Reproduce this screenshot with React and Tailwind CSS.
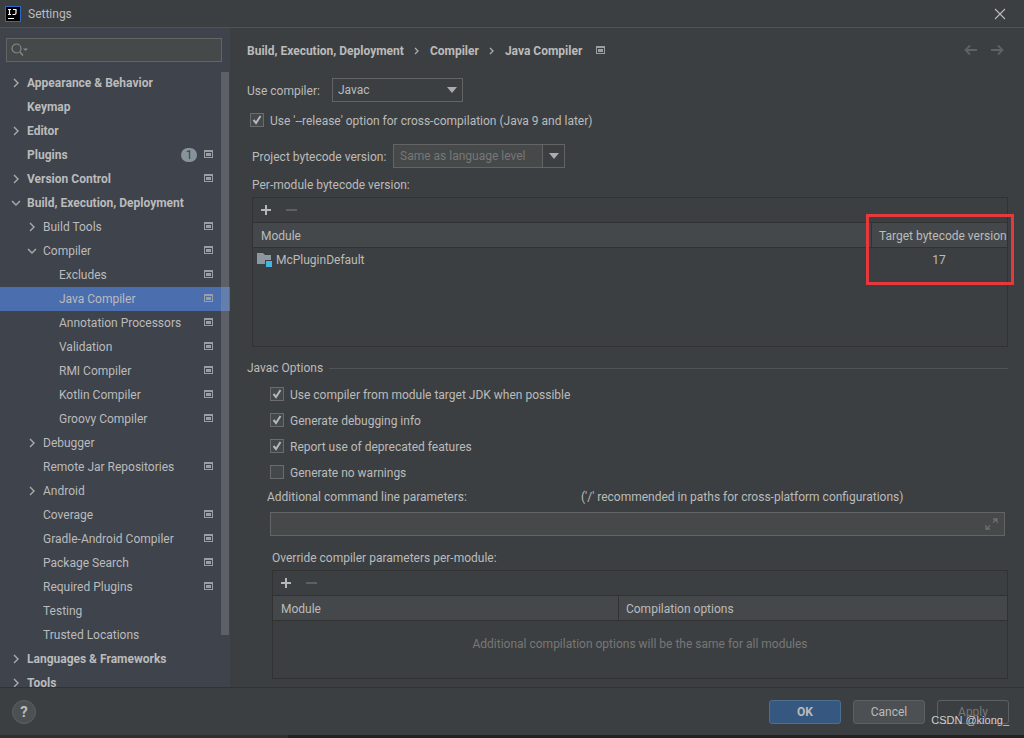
import React, { useState } from "react";

const TREE = [
  { label: "Appearance & Behavior", level: 0, arrow: "right" },
  { label: "Keymap", level: 0 },
  { label: "Editor", level: 0, arrow: "right" },
  { label: "Plugins", level: 0, badge: 1, project: true },
  { label: "Version Control", level: 0, arrow: "right", project: true },
  { label: "Build, Execution, Deployment", level: 0, arrow: "down" },
  { label: "Build Tools", level: 1, arrow: "right", project: true },
  { label: "Compiler", level: 1, arrow: "down", project: true },
  { label: "Excludes", level: 2, project: true },
  { label: "Java Compiler", level: 2, project: true },
  { label: "Annotation Processors", level: 2, project: true },
  { label: "Validation", level: 2, project: true },
  { label: "RMI Compiler", level: 2, project: true },
  { label: "Kotlin Compiler", level: 2, project: true },
  { label: "Groovy Compiler", level: 2, project: true },
  { label: "Debugger", level: 1, arrow: "right" },
  { label: "Remote Jar Repositories", level: 1, project: true },
  { label: "Android", level: 1, arrow: "right" },
  { label: "Coverage", level: 1, project: true },
  { label: "Gradle-Android Compiler", level: 1, project: true },
  { label: "Package Search", level: 1, project: true },
  { label: "Required Plugins", level: 1, project: true },
  { label: "Testing", level: 1 },
  { label: "Trusted Locations", level: 1 },
  { label: "Languages & Frameworks", level: 0, arrow: "right" },
  { label: "Tools", level: 0, arrow: "right" },
];

const INDENT = ["pl-[11px] font-bold", "pl-[27px]", "pl-[43px]"];

const JAVAC_OPTIONS = [
  { id: "jdk", label: "Use compiler from module target JDK when possible", on: true },
  { id: "debug", label: "Generate debugging info", on: true },
  { id: "deprecated", label: "Report use of deprecated features", on: true },
  { id: "nowarn", label: "Generate no warnings", on: false },
];

function ProjectIcon() {
  return (
    <svg width="9" height="10" viewBox="0 0 9 10" className="block shrink-0" aria-hidden="true">
      <path fill="#9a9fa4" fillRule="evenodd" d="M0 0h9v8H0zM1 2v5h7V2z" />
      <path fill="#9a9fa4" d="M2 3h5v3H2z" />
    </svg>
  );
}

function Arrow({ dir }) {
  return (
    <svg width="10" height="10" viewBox="0 0 10 10" fill="none" stroke="#a9adb1" strokeWidth="1.4" aria-hidden="true">
      {dir === "right" ? <path d="M3 1l4 4-4 4" /> : <path d="M1 3l4 4 4-4" />}
    </svg>
  );
}

function Checkbox({ id, label, defaultChecked }) {
  return (
    <label htmlFor={id} className="flex items-center gap-1.5">
      <span className="relative h-3.5 w-3.5">
        <input
          id={id}
          type="checkbox"
          defaultChecked={defaultChecked}
          className="peer block h-3.5 w-3.5 appearance-none border border-[#6b6b6b] bg-[#43494a]"
        />
        <svg
          viewBox="0 0 14 14"
          fill="none"
          stroke="#b4b8bb"
          strokeWidth="2"
          className="pointer-events-none absolute inset-0 hidden peer-checked:block"
          aria-hidden="true"
        >
          <path d="M3.5 7l2.5 3 4.5-7" />
        </svg>
      </span>
      <span className="pt-px">{label}</span>
    </label>
  );
}

function Toolbar() {
  return (
    <div className="flex h-[25px] shrink-0 items-center gap-3.5 border-b border-[#323232] pl-[7px]">
      <button aria-label="Add">
        <svg width="12" height="12" viewBox="0 0 12 12" className="block" stroke="#b4b8bb" strokeWidth="2">
          <path d="M6 1v10M1 6h10" />
        </svg>
      </button>
      <button aria-label="Remove" disabled>
        <svg width="12" height="12" viewBox="0 0 12 12" className="block" stroke="#5e6163" strokeWidth="2">
          <path d="M0 6h11" />
        </svg>
      </button>
    </div>
  );
}

function Crumb() {
  return (
    <svg width="6" height="8" viewBox="0 0 6 8" fill="none" stroke="#a9adb1" strokeWidth="1.3" aria-hidden="true">
      <path d="M1 1l3 3-3 3" />
    </svg>
  );
}

function NavArrow({ flip }) {
  return (
    <svg
      width="14"
      height="12"
      viewBox="0 0 14 12"
      fill="none"
      stroke="#5f6264"
      strokeWidth="1.8"
      className={flip ? "block rotate-180" : "block"}
      aria-hidden="true"
    >
      <path d="M13 6H1.5M6 1.5L1.5 6 6 10.5" />
    </svg>
  );
}

function Sidebar() {
  const [selected, setSelected] = useState("Java Compiler");

  return (
    <aside className="relative flex w-[230px] shrink-0 flex-col bg-[#3e434c]">
      <div className="flex h-[43px] shrink-0 items-start pt-2.5 pr-2 pl-1.5">
        <div className="relative h-6 w-full">
          <input
            type="text"
            aria-label="Search settings"
            className="h-6 w-full border border-[#646464] bg-[#45494a] pl-6 outline-none"
          />
          <svg
            width="18"
            height="14"
            viewBox="0 0 18 14"
            fill="none"
            stroke="#85898c"
            className="absolute top-[5px] left-[5px]"
            aria-hidden="true"
          >
            <circle cx="5.5" cy="5.5" r="4.5" strokeWidth="1.2" />
            <path d="M9 9l3 3.5" strokeWidth="1.4" />
            <path d="M12 5.5h5l-2.5 2.5z" fill="#85898c" stroke="none" />
          </svg>
        </div>
      </div>
      <ul className="min-h-0 flex-1 overflow-hidden">
        {TREE.map((item) => (
          <li key={item.label}>
            <button
              onClick={() => setSelected(item.label)}
              className={`flex h-6 w-full items-center gap-1.5 pr-[17px] text-left ${INDENT[item.level]} ${
                selected === item.label ? "bg-[#4b6eaf]" : ""
              }`}
            >
              <span className="w-2.5">{item.arrow && <Arrow dir={item.arrow} />}</span>
              <span className="flex-1 whitespace-nowrap">{item.label}</span>
              {item.badge && (
                <span className="mr-px flex h-3.5 w-4 items-center justify-center rounded-full bg-[#87939a] font-normal text-[#3a3f45]">
                  {item.badge}
                </span>
              )}
              {item.project && <ProjectIcon />}
            </button>
          </li>
        ))}
      </ul>
      <div className="absolute top-11 right-px h-[563px] w-2 bg-[#a6a6a6]/30" />
    </aside>
  );
}

export default function App() {
  return (
    <div className="flex h-screen flex-col overflow-hidden bg-[#3c3f41] font-['Roboto',sans-serif] text-[12px] leading-4 text-[#bbbbbb]">
      <header className="flex h-7 shrink-0 items-center gap-[7px] border-b border-[#515355] pr-[18px] pl-[5px]">
        <svg width="16" height="16" viewBox="0 0 16 16" aria-hidden="true">
          <path fill="#2f68c4" d="M0 0h16v16H0z" />
          <path fill="#000" d="M1 1h14v14H1z" />
          <path fill="none" stroke="#fff" strokeWidth="1.2" d="M3 3.500h3M4.500 3.500v5M3 8.500h3M8 3.500h3v3.500q0 1.500-1.500 1.500H7.500" />
          <path fill="#fff" d="M3 12h6v1H3z" />
        </svg>
        <span className="flex-1">Settings</span>
        <button aria-label="Close">
          <svg width="12" height="12" viewBox="0 0 12 12" className="block" stroke="#bbbbbb" strokeWidth="1.1">
            <path d="M1 1l10 10M11 1L1 11" />
          </svg>
        </button>
      </header>

      <div className="flex min-h-0 flex-1">
        <Sidebar />

        <main className="flex min-w-0 flex-1 flex-col pt-2.5 pr-4 pb-2 pl-[17px]">
          <div className="flex h-6 shrink-0 items-center justify-between pr-1">
            <nav className="flex items-center gap-2.5 pt-px font-bold">
              <span>Build, Execution, Deployment</span>
              <Crumb />
              <span>Compiler</span>
              <Crumb />
              <span>Java Compiler</span>
              <span className="pl-1">
                <ProjectIcon />
              </span>
            </nav>
            <div className="flex gap-3">
              <button aria-label="Back" disabled>
                <NavArrow />
              </button>
              <button aria-label="Forward" disabled>
                <NavArrow flip />
              </button>
            </div>
          </div>

          <div className="mt-4 flex h-6 shrink-0 items-center">
            <label htmlFor="compiler" className="w-[85px] pt-px whitespace-nowrap">
              Use compiler:
            </label>
            <div className="relative">
              <select
                id="compiler"
                className="block h-6 w-[131px] appearance-none border border-[#646464] bg-[#3c3f41] pl-[5px] outline-none"
              >
                <option>Javac</option>
                <option>Eclipse</option>
              </select>
              <svg width="10" height="6" viewBox="0 0 10 6" className="pointer-events-none absolute top-[9px] right-1.5" aria-hidden="true">
                <path fill="#a9adb1" d="M0 0h10L5 6z" />
              </svg>
            </div>
          </div>

          <div className="mt-2 flex h-5 shrink-0 items-center pl-[3px]">
            <Checkbox id="release" label="Use '--release' option for cross-compilation (Java 9 and later)" defaultChecked />
          </div>

          <div className="mt-3.5 flex h-6 shrink-0 items-center pl-[5px]">
            <label htmlFor="bytecode" className="w-[141px] pt-px whitespace-nowrap">
              Project bytecode version:
            </label>
            <div className="flex h-6 w-[172px] border border-[#646464]">
              <input
                id="bytecode"
                type="text"
                placeholder="Same as language level"
                className="min-w-0 flex-1 bg-[#45494a] pl-1.5 outline-none placeholder:text-[#777777]"
              />
              <button aria-label="Show versions" className="flex w-[22px] items-center justify-center border-l border-[#646464]">
                <svg width="10" height="6" viewBox="0 0 10 6" aria-hidden="true">
                  <path fill="#a9adb1" d="M0 0h10L5 6z" />
                </svg>
              </button>
            </div>
          </div>

          <div className="mt-[9px] shrink-0 pl-[5px]">Per-module bytecode version:</div>
          <div className="relative mt-1 ml-[5px] h-[150px] shrink-0 border border-[#323232]">
            <Toolbar />
            <table className="w-full table-fixed border-separate border-spacing-0">
              <colgroup>
                <col />
                <col className="w-[136px]" />
              </colgroup>
              <thead>
                <tr className="h-[25px] bg-[#45484a] text-left">
                  <th className="border-b border-[#323232] pt-px pr-0 pb-0 pl-2 font-normal">Module</th>
                  <th className="border-b border-l border-[#323232] pt-px pr-0 pb-0 pl-[7px] font-normal whitespace-nowrap">
                    Target bytecode version
                  </th>
                </tr>
              </thead>
              <tbody>
                <tr className="h-6">
                  <td className="p-0 pl-1">
                    <div className="flex items-center gap-1">
                      <svg width="15" height="14" viewBox="0 0 15 14" aria-hidden="true">
                        <path fill="#8c989f" d="M0 0h6l2 2h6v5H8v4H0z" />
                        <path fill="#40b6e0" d="M9 8h6v6H9z" />
                      </svg>
                      McPluginDefault
                    </div>
                  </td>
                  <td className="p-0 text-center">17</td>
                </tr>
              </tbody>
            </table>
            <div className="pointer-events-none absolute top-4 -right-[7px] h-[71px] w-[148px] border-3 border-[#e5393c]" />
          </div>

          <div className="mt-[13px] flex shrink-0 items-center gap-1.5">
            Javac Options
            <div className="h-px flex-1 bg-[#515355]" />
          </div>

          <div className="mt-[5px] shrink-0 pl-[23px]">
            {JAVAC_OPTIONS.map((opt) => (
              <div key={opt.id} className="flex h-[26px] items-center">
                <Checkbox id={opt.id} label={opt.label} defaultChecked={opt.on} />
              </div>
            ))}
          </div>

          <div className="mt-1 flex shrink-0 pl-5">
            <label htmlFor="params" className="w-[314px]">
              Additional command line parameters:
            </label>
            <span>{"('/' recommended in paths for cross-platform configurations)"}</span>
          </div>
          <div className="relative mt-[7px] mr-[3px] ml-[23px] h-6 shrink-0">
            <input id="params" type="text" className="block h-6 w-full border border-[#646464] bg-[#45494a] px-1.5 outline-none" />
            <button aria-label="Expand" className="absolute top-1.5 right-[7px]">
              <svg width="13" height="12" viewBox="0 0 13 12" className="block" fill="none" stroke="#6c6f71" strokeWidth="1.3">
                <path d="M8 4.500l3.500-3.500M8 1h4v4M5 7.500L1.500 11M1 7v4h4" />
              </svg>
            </button>
          </div>

          <div className="mt-3.5 shrink-0 pl-[25px]">Override compiler parameters per-module:</div>
          <div className="mt-1 ml-[25px] flex min-h-0 flex-1 flex-col border border-[#323232]">
            <Toolbar />
            <table className="w-full table-fixed border-separate border-spacing-0">
              <thead>
                <tr className="h-[25px] bg-[#45484a] text-left">
                  <th className="w-[47%] border-b border-[#323232] pt-px pr-0 pb-0 pl-2 font-normal">Module</th>
                  <th className="border-b border-l border-[#323232] pt-px pr-0 pb-0 pl-[7px] font-normal">Compilation options</th>
                </tr>
              </thead>
            </table>
            <p className="pt-[15px] text-center text-[#777777]">
              Additional compilation options will be the same for all modules
            </p>
          </div>
        </main>
      </div>

      <footer className="flex h-12 shrink-0 items-center border-t border-[#323232] pr-[15px] pl-3">
        <button aria-label="Help" className="h-6 w-6 rounded-full border border-[#5e6060] bg-[#4c5052] text-[15px] font-bold">
          ?
        </button>
        <div className="ml-auto flex gap-3">
          <button className="h-6 w-[72px] rounded-[3px] border border-[#4c708c] bg-[#365880] font-bold">OK</button>
          <button className="h-6 w-[72px] rounded-[3px] border border-[#5e6060] bg-[#4c5052]">Cancel</button>
          <div className="relative">
            <button disabled className="h-6 w-[72px] rounded-[3px] border border-[#5e6060] text-[#777777]">
              Apply
            </button>
            <span className="absolute top-3 right-0 font-['Liberation_Sans',sans-serif] text-[11px] whitespace-nowrap text-[#d0d0d0]">
              CSDN @kiong_
            </span>
          </div>
        </div>
      </footer>
      <div className="flex h-[3px] shrink-0 bg-[#222222]">
        <div className="w-72 bg-[#2f3031]" />
      </div>
    </div>
  );
}
